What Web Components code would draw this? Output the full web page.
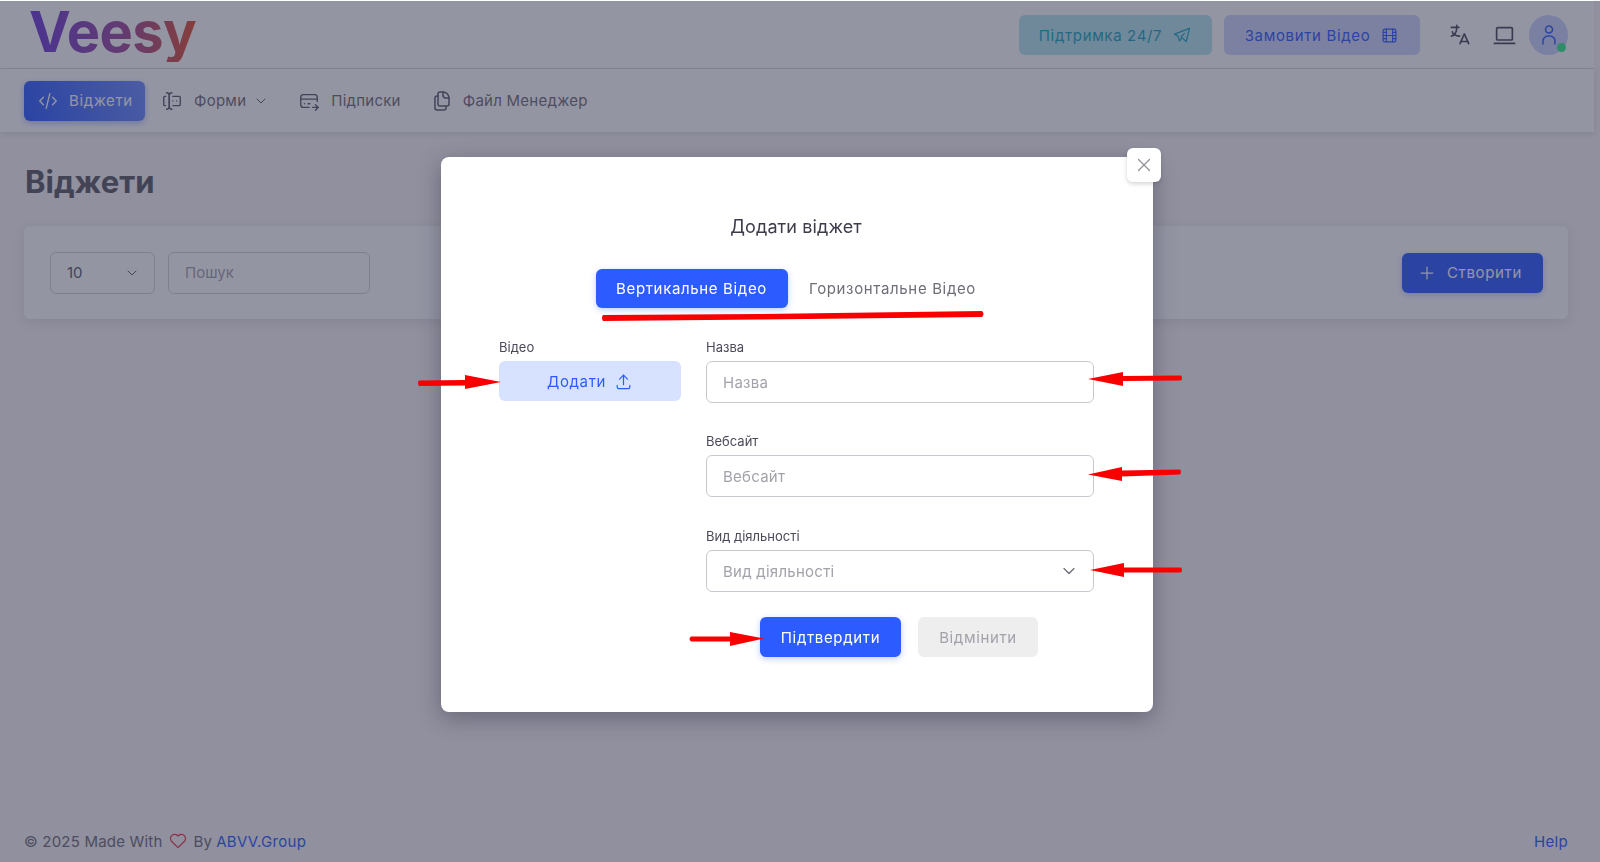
<!DOCTYPE html>
<html lang="uk">
<head>
<meta charset="UTF-8">
<title>Veesy</title>
<style>
    html, body { margin: 0; height: 100%; overflow: hidden; }
    body {
        background: #f7f4f5;
        color: #4b4a5a;
        font: 15px Inter, "Noto Sans", sans-serif;
    }
</style>
</head>
<body>
<app-shell>
    <top-bar></top-bar>
    <main-nav>
        <nav-item icon="code" active>Віджети</nav-item>
        <nav-item icon="forms" caret style="margin-left:16px">Форми</nav-item>
        <nav-item icon="card" style="margin-left:29px">Підписки</nav-item>
        <nav-item icon="files" icon-size="24" style="margin-left:29px;gap:9px">Файл Менеджер</nav-item>
    </main-nav>
    <widgets-page></widgets-page>
    <page-footer></page-footer>
</app-shell>

<modal-backdrop>
    <add-widget-dialog></add-widget-dialog>
</modal-backdrop>
<red-marks></red-marks>

<script>
    const ICONS = {
        code: '<path d="M7 8l-4 4l4 4"/><path d="M17 8l4 4l-4 4"/><path d="M14 4l-4 16"/>',
        forms: '<path d="M12 3a3 3 0 0 0 -3 3v12a3 3 0 0 0 3 3"/><path d="M6 3a3 3 0 0 1 3 3v12a3 3 0 0 1 -3 3"/><path d="M13 7h7a1 1 0 0 1 1 1v8a1 1 0 0 1 -1 1h-7"/><path d="M5 7h-1a1 1 0 0 0 -1 1v8a1 1 0 0 0 1 1h1"/><path d="M17 12h.01"/><path d="M13 12h.01"/>',
        card: '<path d="M12 19h-6a3 3 0 0 1 -3 -3v-8a3 3 0 0 1 3 -3h12a3 3 0 0 1 3 3v4.5"/><path d="M3 10h18"/><path d="M16 19h6"/><path d="M19 16l3 3l-3 3"/><path d="M7.005 15h.005"/><path d="M11 15h2"/>',
        files: '<path d="M10 3h3a6 6 0 0 1 6 6v6a2 2 0 0 1 -2 2h-7a2 2 0 0 1 -2 -2v-10a2 2 0 0 1 2 -2z"/><path d="M13 3v3a3 3 0 0 0 3 3h3"/><path d="M8 7h-1a2 2 0 0 0 -2 2v10a2 2 0 0 0 2 2h7a2 2 0 0 0 2 -2v-2"/>',
        chevron: '<path d="M6 9l6 6l6 -6"/>',
        send: '<path d="M15 10l-4 4l6 6l4 -16l-18 7l4 2l2 6l3 -4"/>',
        movie: '<path d="M4 6a2 2 0 0 1 2 -2h12a2 2 0 0 1 2 2v12a2 2 0 0 1 -2 2h-12a2 2 0 0 1 -2 -2z"/><path d="M8 4v16"/><path d="M16 4v16"/><path d="M4 8h4"/><path d="M4 16h4"/><path d="M4 12h16"/><path d="M16 8h4"/><path d="M16 16h4"/>',
        language: '<path d="M4 5h7"/><path d="M9 3v2c0 4.418 -2.239 8 -5 8"/><path d="M5 9c0 2.144 2.952 3.908 6.7 4"/><path d="M12 20l4 -9l4 9"/><path d="M19.1 18h-6.2"/>',
        laptop: '<path d="M3 19h18"/><path d="M6 5h12a1 1 0 0 1 1 1v9a1 1 0 0 1 -1 1h-12a1 1 0 0 1 -1 -1v-9a1 1 0 0 1 1 -1z"/>',
        user: '<path d="M8.5 6.5a3.5 3.5 0 1 0 7 0a3.5 3.5 0 0 0 -7 0"/><path d="M6 21v-3a5 5 0 0 1 5 -5h2a5 5 0 0 1 5 5v3"/>',
        upload: '<path d="M4 17v2a2 2 0 0 0 2 2h12a2 2 0 0 0 2 -2v-2"/><path d="M7 9l5 -5l5 5"/><path d="M12 4v12"/>',
        heart: '<path d="M19.5 12.572l-7.5 7.428l-7.5 -7.428a5 5 0 1 1 7.5 -6.566a5 5 0 1 1 7.5 6.572"/>',
        x: '<path d="M18 6l-12 12"/><path d="M6 6l12 12"/>',
        plus: '<path d="M12 5v14"/><path d="M5 12h14"/>'
    };

    class UiIcon extends HTMLElement {
        constructor() {
            super();
            const size = this.getAttribute('size') || 22;
            const stroke = this.getAttribute('stroke') || 1.5;
            this.attachShadow({ mode: 'open' }).innerHTML = `
                <style>:host { display: inline-flex; flex: none; } svg { display: block; }</style>
                <svg width="${size}" height="${size}" viewBox="0 0 24 24" fill="none" stroke="currentColor"
                     stroke-width="${stroke}" stroke-linecap="round" stroke-linejoin="round">${ICONS[this.getAttribute('name')]}</svg>`;
        }
    }
    customElements.define('ui-icon', UiIcon);

    class UiButton extends HTMLElement {
        constructor() {
            super();
            this.attachShadow({ mode: 'open' }).innerHTML = `
                <style>
                    :host {
                        display: inline-flex; align-items: center; justify-content: center;
                        box-sizing: border-box; height: 40px; border-radius: 6px;
                        font-size: 15px; letter-spacing: .65px; white-space: nowrap;
                    }
                    :host([variant=primary]) { background: #2c5cff; color: #fff; box-shadow: 0 2px 6px rgba(44,92,255,.3); }
                    :host([variant=ghost]) { color: #6f6e78; }
                    :host([variant=tint]) { background: #d6e2ff; color: #2c5cff; }
                    :host([variant=muted]) { background: #eeeeef; color: #a3a2ab; }
                    :host([variant=teal]) { background: #b6e6ec; color: #1ba5bd; }
                    :host([variant=indigo]) { background: #d0d7fb; color: #2c5cff; }
                </style>
                <slot></slot>`;
        }
    }
    customElements.define('ui-button', UiButton);

    class AppShell extends HTMLElement {
        constructor() {
            super();
            this.attachShadow({ mode: 'open' }).innerHTML = `
                <style>
                    :host { display: flex; flex-direction: column; width: 1594px; height: 862px; }
                </style>
                <slot></slot>`;
        }
    }
    customElements.define('app-shell', AppShell);

    class TopBar extends HTMLElement {
        constructor() {
            super();
            this.attachShadow({ mode: 'open' }).innerHTML = `
                <style>
                    :host {
                        display: flex; align-items: center; box-sizing: border-box; height: 69px;
                        background: #fff; border-bottom: 1px solid #dcdbe0; padding: 2px 26px 0 29px;
                    }
                    .logo {
                        font-size: 56px; font-weight: 700; line-height: 60px; letter-spacing: -.6px;
                        margin-top: -7px;
                        background: linear-gradient(90deg, #6a3ddc 0%, #9a4a9c 55%, #e2512e 100%);
                        -webkit-background-clip: text; background-clip: text; color: transparent;
                    }
                    .right { margin-left: auto; display: flex; align-items: center; }
                    ui-button { gap: 10px; }
                    .support { width: 193px; }
                    .order { width: 196px; margin-left: 12px; }
                    .lang { margin-left: 27px; color: #4b4a5a; }
                    .laptop { margin-left: 18px; color: #4b4a5a; }
                    .avatar {
                        position: relative; width: 39px; height: 40px; border-radius: 50%;
                        margin-left: 11px; background: #cbd4fb; color: #2c5cff;
                        display: flex; align-items: center; justify-content: center;
                    }
                    .avatar i {
                        position: absolute; right: 2px; bottom: 3px; width: 9px; height: 9px;
                        border-radius: 50%; background: #33ee88;
                    }
                </style>
                <div class="logo">Veesy</div>
                <div class="right">
                    <ui-button class="support" variant="teal">Підтримка 24/7 <ui-icon name="send" size="20"></ui-icon></ui-button>
                    <ui-button class="order" variant="indigo">Замовити Відео <ui-icon name="movie" size="19"></ui-icon></ui-button>
                    <ui-icon class="lang" name="language" size="26"></ui-icon>
                    <ui-icon class="laptop" name="laptop" size="27"></ui-icon>
                    <div class="avatar"><ui-icon name="user" size="24"></ui-icon><i></i></div>
                </div>`;
        }
    }
    customElements.define('top-bar', TopBar);

    class MainNav extends HTMLElement {
        constructor() {
            super();
            this.attachShadow({ mode: 'open' }).innerHTML = `
                <style>
                    :host {
                        display: flex; align-items: center; box-sizing: border-box; height: 63px;
                        padding: 0 24px; background: #fff; box-shadow: 0 2px 6px rgba(47,43,61,.12);
                        position: relative;
                    }
                </style>
                <slot></slot>`;
        }
    }
    customElements.define('main-nav', MainNav);

    class NavItem extends HTMLElement {
        constructor() {
            super();
            const caret = this.hasAttribute('caret');
            const iconSize = this.getAttribute('icon-size') || 22;
            this.attachShadow({ mode: 'open' }).innerHTML = `
                <style>
                    :host {
                        display: inline-flex; align-items: center; gap: 11px; height: 40px;
                        border-radius: 6px; color: #6f6e78; font-size: 15px; letter-spacing: .25px;
                    }
                    :host([active]) {
                        box-sizing: border-box; width: 121px; padding-left: 13px; color: #fff;
                        letter-spacing: .6px; gap: 10px;
                        background: linear-gradient(72deg, #2c5cff 0%, #6d8dff 100%);
                        box-shadow: 0 2px 6px rgba(44,92,255,.4);
                    }
                    ui-icon { color: #5d5c6a; }
                    :host([active]) ui-icon { color: #fff; }
                    .caret { margin-left: -4px; }
                </style>
                <ui-icon name="${this.getAttribute('icon')}" size="${iconSize}"></ui-icon>
                <slot></slot>
                ${caret ? '<ui-icon class="caret" name="chevron" size="16"></ui-icon>' : ''}`;
        }
    }
    customElements.define('nav-item', NavItem);

    class WidgetsPage extends HTMLElement {
        constructor() {
            super();
            this.attachShadow({ mode: 'open' }).innerHTML = `
                <style>
                    :host { display: block; flex: 1; padding: 0 26px 0 24px; }
                    h1 { margin: 30px 0 24px 1px; font-size: 31px; line-height: 40px; font-weight: 700; color: #5a5a62; }
                    .card {
                        display: flex; align-items: center; height: 93px; box-sizing: border-box;
                        padding: 0 25px 0 26px; background: #fff; border-radius: 6px;
                        box-shadow: 0 3px 12px rgba(47,43,61,.1);
                    }
                    .box {
                        box-sizing: border-box; height: 42px; border: 1px solid #d4d3d8; border-radius: 6px;
                        display: flex; align-items: center; padding: 0 16px; color: #a3a2ab; font-size: 15px;
                    }
                    .size { width: 105px; color: #5d5c6a; justify-content: space-between; padding-right: 14px; }
                    .search { width: 202px; margin-left: 13px; }
                    ui-button { margin-left: auto; width: 141px; gap: 10px; padding-right: 6px; }
                </style>
                <h1>Віджети</h1>
                <div class="card">
                    <div class="box size">10 <ui-icon name="chevron" size="16"></ui-icon></div>
                    <div class="box search">Пошук</div>
                    <ui-button variant="primary"><ui-icon name="plus" size="20"></ui-icon> Створити</ui-button>
                </div>`;
        }
    }
    customElements.define('widgets-page', WidgetsPage);

    class PageFooter extends HTMLElement {
        constructor() {
            super();
            this.attachShadow({ mode: 'open' }).innerHTML = `
                <style>
                    :host {
                        display: flex; align-items: center; height: 42px; padding: 0 26px 0 24px;
                        font-size: 15px; letter-spacing: .2px; color: #6f6e78; white-space: pre;
                    }
                    ui-icon { margin: 0 6px 0 5px; color: #ea3a4a; }
                    a { color: #2c5cff; text-decoration: none; margin-left: 4px; letter-spacing: .3px; }
                    .help { margin-left: auto; }
                </style>
                <span>© 2025 Made With</span><ui-icon name="heart" size="20"></ui-icon><span>By</span><a>ABVV.Group</a><a class="help">Help</a>`;
        }
    }
    customElements.define('page-footer', PageFooter);

    class ModalBackdrop extends HTMLElement {
        constructor() {
            super();
            this.attachShadow({ mode: 'open' }).innerHTML = `
                <style>
                    :host {
                        position: fixed; inset: 1px 0 0 0; box-sizing: border-box; padding: 156px 6px 0 0;
                        display: flex; justify-content: center; align-items: flex-start;
                        background: rgba(41,43,71,.5);
                    }
                </style>
                <slot></slot>`;
        }
    }
    customElements.define('modal-backdrop', ModalBackdrop);

    class FormField extends HTMLElement {
        constructor() {
            super();
            this.attachShadow({ mode: 'open' }).innerHTML = `
                <style>
                    :host { display: block; }
                    label { display: block; font-size: 13px; line-height: 18px; margin-bottom: 5px; color: #4b4a5a; }
                    .box {
                        box-sizing: border-box; height: 42px; border: 1px solid #c9c8ce; border-radius: 6px;
                        display: flex; align-items: center; justify-content: space-between;
                        padding: 0 14px 0 16px; color: #a3a2ab; font-size: 15px; letter-spacing: .25px;
                    }
                    ui-icon { color: #6d6c78; }
                </style>
                <label>${this.getAttribute('label')}</label>
                <div class="box">${this.getAttribute('label')}${this.hasAttribute('select') ? '<ui-icon name="chevron" size="20"></ui-icon>' : ''}</div>`;
        }
    }
    customElements.define('form-field', FormField);

    class AddWidgetDialog extends HTMLElement {
        constructor() {
            super();
            this.attachShadow({ mode: 'open' }).innerHTML = `
                <style>
                    :host {
                        position: relative; display: block; box-sizing: border-box; width: 712px;
                        padding: 57px 60px 55px 58px; background: #fff; border-radius: 8px;
                        box-shadow: 0 6px 22px rgba(30,28,50,.35);
                    }
                    .close {
                        position: absolute; top: -9px; right: -8px; width: 34px; height: 34px; border-radius: 6px;
                        background: #fff; display: flex; align-items: center; justify-content: center;
                        color: #8f8e99; box-shadow: 0 2px 4px rgba(47,43,61,.2);
                    }
                    h2 { margin: 0 0 29px; font-size: 18px; line-height: 26px; font-weight: 400; letter-spacing: .1px; text-align: center; color: #3d3c4a; }
                    .tabs { display: flex; justify-content: center; margin: 0 0 30px 1px; }
                    .tabs ui-button { height: 39px; }
                    .tabs .on { width: 192px; }
                    .tabs .off { width: 210px; }
                    .form { display: grid; grid-template-columns: 182px 388px; column-gap: 25px; }
                    .video label { display: block; font-size: 13px; line-height: 18px; margin-bottom: 5px; color: #4b4a5a; }
                    .video ui-button { width: 100%; gap: 8px; }
                    .fields { display: flex; flex-direction: column; gap: 29px; }
                    .fields .last { margin-top: 1px; }
                    .actions { display: flex; justify-content: center; gap: 17px; margin: 25px 2px 0 0; }
                    .actions .ok { width: 141px; }
                    .actions .no { width: 120px; }
                </style>
                <div class="close"><ui-icon name="x" size="22" stroke="1.3"></ui-icon></div>
                <h2>Додати віджет</h2>
                <div class="tabs">
                    <ui-button class="on" variant="primary">Вертикальне Відео</ui-button>
                    <ui-button class="off" variant="ghost">Горизонтальне Відео</ui-button>
                </div>
                <div class="form">
                    <div class="video">
                        <label>Відео</label>
                        <ui-button variant="tint">Додати <ui-icon name="upload" size="19"></ui-icon></ui-button>
                    </div>
                    <div>
                        <div class="fields">
                            <form-field label="Назва"></form-field>
                            <form-field label="Вебсайт"></form-field>
                            <form-field class="last" label="Вид діяльності" select></form-field>
                        </div>
                        <div class="actions">
                            <ui-button class="ok" variant="primary">Підтвердити</ui-button>
                            <ui-button class="no" variant="muted">Відмінити</ui-button>
                        </div>
                    </div>
                </div>`;
        }
    }
    customElements.define('add-widget-dialog', AddWidgetDialog);

    // hand drawn red marks that sit on top of the screenshot
    class RedMarks extends HTMLElement {
        constructor() {
            super();
            this.attachShadow({ mode: 'open' }).innerHTML = `
                <style>
                    :host { position: fixed; inset: 0; pointer-events: none; }
                    svg { display: block; }
                </style>
                <svg width="1600" height="862" fill="#f80000" stroke="none">
                    <path d="M603 315 L760 314 L982 311 Q985 314 982 317 L760 319.5 L603 321 Q601 318 603 315z"/>
                    <path d="M419 380.5 L465 380 L465 375 L501 382 L465 389 L465 385.5 L419 386 Q417 383 419 380.5z"/>
                    <path d="M1181 375.5 L1123 376 L1123 372 L1088 379 L1123 386 L1123 381 L1181 380.5 Q1183 378 1181 375.5z"/>
                    <path d="M1180 469.5 L1122 470.5 L1122 467 L1088 474.5 L1122 481 L1122 476.5 L1180 474.5 Q1182 472 1180 469.5z"/>
                    <path d="M1181 567.5 L1124 567.5 L1124 563 L1090 570 L1124 577 L1124 572.5 L1181 572.5 Q1183 570 1181 567.5z"/>
                    <path d="M691 636.5 L730 636.5 L730 632 L764 638.5 L730 646 L730 641.5 L691 641.5 Q688 639 691 636.5z"/>
                </svg>`;
        }
    }
    customElements.define('red-marks', RedMarks);
</script>
</body>
</html>
